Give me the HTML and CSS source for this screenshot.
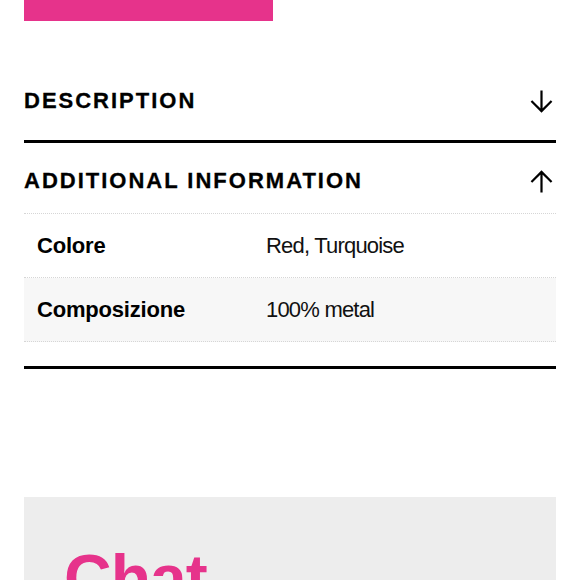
FILE: index.html
```html
<!DOCTYPE html>
<html lang="it">
<head>
<meta charset="utf-8">
<title>Product info</title>
<link rel="stylesheet" href="styles.css">
</head>
<body>
<div class="page">
  <div class="cta-bar"></div>

  <section class="accordion">
    <div class="acc-item">
      <div class="acc-header">
        <h2 class="acc-title">Description</h2>
        <svg class="acc-icon" viewBox="0 0 24 24" width="24" height="24" aria-hidden="true">
          <path d="M12 0.5 V22 M1.5 11.5 L12 22 L22.5 11.5" fill="none" stroke="#000" stroke-width="2.3"/>
        </svg>
      </div>
    </div>

    <div class="acc-item">
      <div class="acc-header acc-header--open">
        <h2 class="acc-title">Additional information</h2>
        <svg class="acc-icon" viewBox="0 0 24 24" width="24" height="24" aria-hidden="true">
          <path d="M12 23.5 V2 M1.5 12.5 L12 2 L22.5 12.5" fill="none" stroke="#000" stroke-width="2.3"/>
        </svg>
      </div>
      <div class="acc-panel">
        <div class="info-table">
          <div class="info-row">
            <div class="info-label">Colore</div>
            <div class="info-value">Red, Turquoise</div>
          </div>
          <div class="info-row info-row--alt">
            <div class="info-label">Composizione</div>
            <div class="info-value">100% metal</div>
          </div>
        </div>
      </div>
    </div>
  </section>

  <section class="chat-box">
    <h2 class="chat-title">Chat</h2>
  </section>
</div>
</body>
</html>
```

FILE: styles.css
```css
* { box-sizing: border-box; }

html, body {
  margin: 0;
  padding: 0;
  background: #fff;
}

body {
  font-family: "Liberation Sans", Arial, sans-serif;
  color: #000;
  overflow: hidden;
}

.page {
  padding: 0 24px;
}

.cta-bar {
  width: 249px;
  height: 21px;
  background: #e6338b;
}

.accordion {
  margin-top: 42px;
}

.acc-item {
  border-bottom: 3px solid #000;
}

.acc-header {
  display: flex;
  align-items: center;
  justify-content: space-between;
  padding: 25px 3px 26px 0;
}

.acc-header--open {
  padding-bottom: 19px;
}

.acc-title {
  margin: 0;
  font-size: 22px;
  line-height: 26px;
  font-weight: 700;
  text-transform: uppercase;
  letter-spacing: 2px;
  -webkit-text-stroke: 0.3px #000;
}

.acc-icon {
  display: block;
  width: 23px;
  height: 23px;
}

.acc-panel {
  padding-bottom: 24px;
}

.info-table {
  border-top: 1px dotted #d6d6d6;
}

.info-row {
  display: grid;
  grid-template-columns: 229px 1fr;
  align-items: center;
  height: 64px;
  padding: 0 13px;
  border-bottom: 1px dotted #d6d6d6;
  background: #fff;
}

.info-row--alt {
  background: #f7f7f7;
}

.info-label {
  font-size: 22px;
  font-weight: 700;
  letter-spacing: -0.2px;
}

.info-value {
  font-size: 22px;
  font-weight: 400;
  color: #111;
  letter-spacing: -0.8px;
}

.chat-box {
  margin-top: 128px;
  background: #ededed;
  padding: 48px 40px 40px;
  height: 200px;
}

.chat-title {
  margin: 0;
  font-size: 66px;
  line-height: 66px;
  font-weight: 700;
  color: #e6338b;
  letter-spacing: -1px;
}
```
